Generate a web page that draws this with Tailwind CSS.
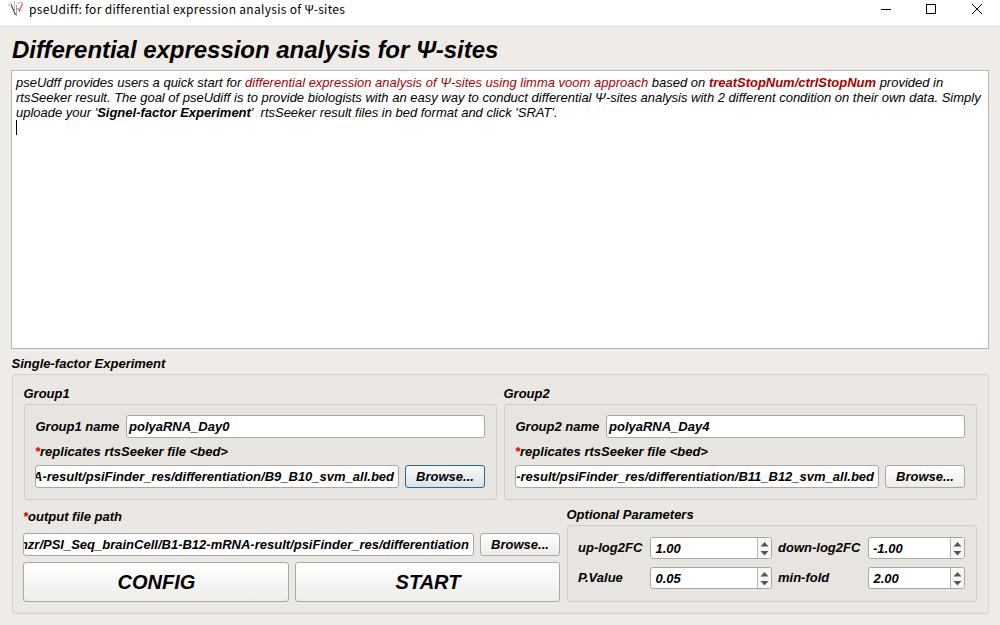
<!DOCTYPE html>
<html lang="en">
<head>
<meta charset="utf-8">
<title>pseUdiff</title>
<script src="https://cdn.jsdelivr.net/npm/@tailwindcss/browser@4"></script>
</head>
<body class="w-[1000px] h-[625px] overflow-hidden bg-[#efebe7] text-black font-['Liberation_Sans',sans-serif] text-[13px] leading-[15px]">
<div class="flex flex-col h-full">
  <header class="h-[25px] bg-white flex items-start justify-between shrink-0">
    <div class="flex items-start pl-2">
      <svg class="w-4 h-4 mt-px" viewBox="0 0 16 16" fill="none"><path d="M.5 4.500L2.500 1.500L4.500 3M9.500 2.500L13 1L15.500 3" stroke="#999" stroke-dasharray="2 1"/><path d="M3 3.500L5 8L7.500 14" stroke="#444" stroke-width="1.200"/><path d="M6.500 0V11" stroke="#bbb"/><path d="M8.500 15V4" stroke="#86aeb5"/><path d="M9.500 7L11.500 10L14.500 2.500" stroke="#d9534f" stroke-width="1.200"/></svg>
      <h2 class="ml-[5px] mt-px text-[12px] tracking-[0.31px] whitespace-pre font-['Noto_Sans_CJK_SC','Noto_Sans',sans-serif]">pseUdiff: for differential expression analysis of Ψ-sites</h2>
    </div>
    <div class="flex pr-[17px] pt-1">
      <svg class="w-3 h-3 mr-[33px]" viewBox="0 0 12 12"><path d="M1 5.500H11" stroke="#000"/></svg>
      <svg class="w-3 h-3 mr-[34px]" viewBox="0 0 12 12"><rect x="1.500" y=".5" width="9" height="9" fill="none" stroke="#000"/></svg>
      <svg class="w-3 h-3" viewBox="0 0 12 12"><path d="M1 0L11 10M11 0L1 10" stroke="#000"/></svg>
    </div>
  </header>
  <main class="px-[11px] italic flex flex-col">
    <h1 class="h-[45px] pt-[11px] pl-px text-[24px] leading-[28px] tracking-[-0.03px] font-bold whitespace-pre">Differential expression analysis for Ψ-sites</h1>
    <div class="h-[279px] border border-[#b6b2af] bg-white pt-1 pl-1">
      <p class="whitespace-pre">pseUdff provides users a quick start for <span class="text-[#aa0000]">differential expression analysis of Ψ-sites using limma voom approach</span> based on <b class="text-[#aa0000] tracking-[-0.02px]">treatStopNum/ctrlStopNum</b> provided in</p>
      <p class="whitespace-pre tracking-[-0.004px]">rtsSeeker result. The goal of pseUdiff is to provide biologists with an easy way to conduct differential Ψ-sites analysis with 2 different condition on their own data. Simply</p>
      <p class="whitespace-pre tracking-[-0.007px]">uploade your '<b>Signel-factor Experiment</b>'  rtsSeeker result files in bed format and click 'SRAT'.</p>
      <div class="w-px h-[15px] bg-black"></div>
    </div>
    <h2 class="h-[25px] pt-[7px] pl-[0.5px] font-bold">Single-factor Experiment</h2>
    <section class="ml-px h-[240px] border border-[#d5d1cd] rounded-[3px] bg-[#ebe8e3] font-bold pl-[10px] pr-[11px]">
      <div class="flex gap-[7px] pl-px">
        <div class="w-[473px]">
          <h3 class="h-[29px] pt-[11px] -ml-[0.5px]">Group1</h3>
          <div class="h-[96px] border border-[#d1cdc9] rounded-[3px] bg-[#e8e5e0] pl-[10px] pr-[11px] pt-[10px]">
            <div class="flex items-center h-[23px]"><span class="w-[91px] pl-[0.5px]">Group1 name</span><div class="flex-1 h-[23px] border border-[#a9a6a3] rounded-[3px] bg-white pl-[2px] pt-[3px]">polyaRNA_Day0</div></div>
            <p class="h-[27px] pt-[6px]"><span class="text-[#cc0000]">*</span>replicates rtsSeeker file &lt;bed&gt;</p>
            <div class="flex gap-[6px]"><div class="w-[364px] h-[23px] border border-[#a9a6a3] rounded-[3px] bg-white flex justify-end overflow-hidden whitespace-pre pr-1 pt-[3px]">A-result/psiFinder_res/differentiation/B9_B10_svm_all.bed</div><button class="w-20 h-[23px] border border-[#216b94] rounded-[3px] bg-linear-to-b from-[#fafbfc] to-[#dbe2e6] italic font-bold">Browse...</button></div>
          </div>
        </div>
        <div class="w-[473px]">
          <h3 class="h-[29px] pt-[11px] -ml-[0.5px]">Group2</h3>
          <div class="h-[96px] border border-[#d1cdc9] rounded-[3px] bg-[#e8e5e0] pl-[10px] pr-[11px] pt-[10px]">
            <div class="flex items-center h-[23px]"><span class="w-[91px] pl-[0.5px]">Group2 name</span><div class="flex-1 h-[23px] border border-[#a9a6a3] rounded-[3px] bg-white pl-[2px] pt-[3px]">polyaRNA_Day4</div></div>
            <p class="h-[27px] pt-[6px]"><span class="text-[#cc0000]">*</span>replicates rtsSeeker file &lt;bed&gt;</p>
            <div class="flex gap-[6px]"><div class="w-[364px] h-[23px] border border-[#a9a6a3] rounded-[3px] bg-white flex justify-end overflow-hidden whitespace-pre pr-1 pt-[3px]">-result/psiFinder_res/differentiation/B11_B12_svm_all.bed</div><button class="w-20 h-[23px] border border-[#aaa7a4] rounded-[3px] bg-linear-to-b from-white to-[#edecea] italic font-bold">Browse...</button></div>
          </div>
        </div>
      </div>
      <div class="flex gap-[7px]">
        <div class="w-[537px] pt-[9px]">
          <p class="h-[24px]"><span class="text-[#cc0000]">*</span>output file path</p>
          <div class="flex gap-[6px]"><div class="w-[451px] h-[23px] border border-[#a9a6a3] rounded-[3px] bg-white flex justify-end overflow-hidden whitespace-pre pr-1 pt-[3px]">nzr/PSI_Seq_brainCell/B1-B12-mRNA-result/psiFinder_res/differentiation</div><button class="w-20 h-[23px] border border-[#aaa7a4] rounded-[3px] bg-linear-to-b from-white to-[#edecea] italic font-bold">Browse...</button></div>
          <div class="flex gap-[6px] mt-[6px] text-[20px]"><button class="w-[266px] h-10 border border-[#aaa7a4] rounded-[3px] bg-linear-to-b from-white to-[#edecea] italic font-bold pl-px">CONFIG</button><button class="w-[265px] h-10 border border-[#aaa7a4] rounded-[3px] bg-linear-to-b from-white to-[#edecea] italic font-bold pl-px">START</button></div>
        </div>
        <div class="w-[410px]">
          <h3 class="h-[25px] pt-[7px] -ml-[0.5px]">Optional Parameters</h3>
          <div class="h-[77px] border border-[#d1cdc9] rounded-[3px] bg-[#e8e5e0] pl-[10px] pt-[11px] grid grid-cols-[72px_128px_90px_97px] auto-rows-[22px] gap-y-2 content-start">
            <span class="pt-[3px]">up-log2FC</span>
            <div class="w-[122px] border border-[#a9a6a3] rounded-[3px] bg-white flex overflow-hidden"><span class="flex-1 pl-[4.5px] pt-[3px]">1.00</span><span class="w-[14px] border-l border-[#b5b2af] bg-[#f8f7f6]"><svg class="w-[13px] h-5" viewBox="0 0 13 20" fill="#555"><path d="M2.500 8.500L6.500 4L10.500 8.500ZM2.500 13L6.500 17.500L10.500 13Z"/></svg></span></div>
            <span class="pt-[3px]">down-log2FC</span>
            <div class="w-[97px] border border-[#a9a6a3] rounded-[3px] bg-white flex overflow-hidden"><span class="flex-1 pl-[4px] pt-[3px]">-1.00</span><span class="w-[14px] border-l border-[#b5b2af] bg-[#f8f7f6]"><svg class="w-[13px] h-5" viewBox="0 0 13 20" fill="#555"><path d="M2.500 8.500L6.500 4L10.500 8.500ZM2.500 13L6.500 17.500L10.500 13Z"/></svg></span></div>
            <span class="pt-[3px]">P.Value</span>
            <div class="w-[122px] border border-[#a9a6a3] rounded-[3px] bg-white flex overflow-hidden"><span class="flex-1 pl-[4.5px] pt-[3px]">0.05</span><span class="w-[14px] border-l border-[#b5b2af] bg-[#f8f7f6]"><svg class="w-[13px] h-5" viewBox="0 0 13 20" fill="#555"><path d="M2.500 8.500L6.500 4L10.500 8.500ZM2.500 13L6.500 17.500L10.500 13Z"/></svg></span></div>
            <span class="pt-[3px]">min-fold</span>
            <div class="w-[97px] border border-[#a9a6a3] rounded-[3px] bg-white flex overflow-hidden"><span class="flex-1 pl-[4.5px] pt-[3px]">2.00</span><span class="w-[14px] border-l border-[#b5b2af] bg-[#f8f7f6]"><svg class="w-[13px] h-5" viewBox="0 0 13 20" fill="#555"><path d="M2.500 8.500L6.500 4L10.500 8.500ZM2.500 13L6.500 17.500L10.500 13Z"/></svg></span></div>
          </div>
        </div>
      </div>
    </section>
  </main>
</div>
</body>
</html>
